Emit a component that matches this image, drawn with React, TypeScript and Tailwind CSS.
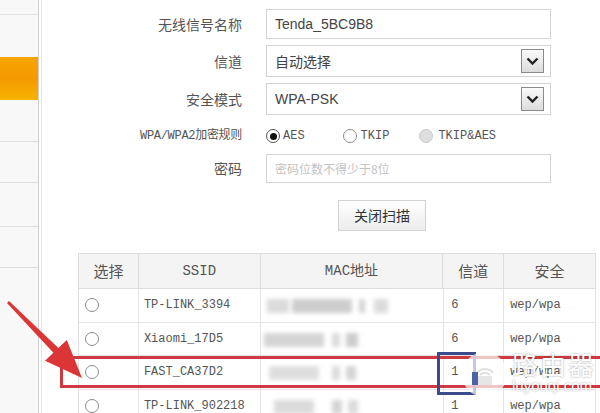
import React from "react";

const cjk = { fontFamily: '"Noto Sans CJK SC", "Noto Sans", sans-serif' };
const mono = { fontFamily: '"Liberation Mono", "Noto Sans CJK SC", monospace' };
const sans = { fontFamily: '"Liberation Sans", "Noto Sans CJK SC", sans-serif' };

function SelectArrow() {
  return (
    <div className="w-[23px] h-[24px] border border-[#8a8a8a] bg-gradient-to-b from-[#fafafa] to-[#dcdcdc] flex items-center justify-center">
      <svg width="13" height="9" viewBox="0 0 13 9">
        <path d="M1.5 1.5 L6.5 6.5 L11.5 1.5" fill="none" stroke="#222" strokeWidth="2.4" />
      </svg>
    </div>
  );
}

function Radio() {
  return <div className="w-[14px] h-[14px] rounded-full border border-[#8c8c8c] bg-white" />;
}

const rows = [
  { ssid: "TP-LINK_3394", ch: "6", mac: [[3, 22, 0.5], [28, 60, 0.7], [95, 6, 0.6], [110, 14, 0.5]] },
  { ssid: "Xiaomi_17D5", ch: "6", mac: [[0, 60, 0.6], [68, 8, 0.5], [82, 12, 0.7]] },
  { ssid: "FAST_CA37D2", ch: "1", mac: [[5, 50, 0.45], [68, 8, 0.5], [82, 10, 0.6]] },
  { ssid: "TP-LINK_902218", ch: "1", mac: [[10, 40, 0.5], [68, 10, 0.6], [84, 10, 0.5]] },
];

export default function App() {
  return (
    <div className="relative w-[600px] h-[413px] overflow-hidden bg-white flex">
      {/* sidebar */}
      <div className="w-[39px] shrink-0 bg-[#f8f8f8] border-r border-[#d0d0d0] flex flex-col">
        <div className="h-[15px] shrink-0 border-b border-[#e2e2e2]" />
        <div className="h-[42px] shrink-0" />
        <div className="h-[43px] shrink-0 bg-gradient-to-b from-[#f7a400] via-[#f49a00] to-[#f6b300]" />
        <div className="h-[42px] shrink-0 border-b border-[#dedede]" />
        <div className="h-[41px] shrink-0 border-b border-[#dedede]" />
        <div className="h-[44px] shrink-0 border-b border-[#dedede]" />
        <div className="h-[41px] shrink-0 border-b border-[#dedede]" />
      </div>
      <div className="w-[3px] shrink-0 border-r border-[#e6e6e6]" />

      {/* main */}
      <div className="flex-1 min-w-0">
        <div className="pt-[9px] text-[#555]">
          <div className="flex items-center h-[30px]">
            <div className="w-[200px] text-right text-[14px]" style={cjk}>无线信号名称</div>
            <div className="ml-[24px] w-[285px] h-[30px] border border-[#d4d4d4] flex items-center pl-[8px] text-[14px] text-[#444]" style={sans}>
              Tenda_5BC9B8
            </div>
          </div>
          <div className="flex items-center h-[32px] mt-[6px]">
            <div className="w-[200px] text-right text-[14px]" style={cjk}>信道</div>
            <div className="ml-[24px] w-[285px] h-[32px] border border-[#d4d4d4] flex items-center justify-between pl-[8px] pr-[6px] text-[14px] text-[#444]" style={cjk}>
              <span>自动选择</span>
              <SelectArrow />
            </div>
          </div>
          <div className="flex items-center h-[32px] mt-[6px]">
            <div className="w-[200px] text-right text-[14px]" style={cjk}>安全模式</div>
            <div className="ml-[24px] w-[285px] h-[32px] border border-[#d4d4d4] flex items-center justify-between pl-[8px] pr-[6px] text-[14px] text-[#444]" style={sans}>
              <span>WPA-PSK</span>
              <SelectArrow />
            </div>
          </div>
          <div className="flex items-center h-[24px] mt-[9px]">
            <div className="w-[200px] text-right text-[12px] tracking-[-0.3px]" style={mono}>WPA/WPA2加密规则</div>
            <div className="ml-[24px] flex items-center text-[12px]" style={mono}>
              <div className="w-[14px] h-[14px] rounded-full border border-[#555] bg-white flex items-center justify-center">
                <div className="w-[7px] h-[7px] rounded-full bg-[#111]" />
              </div>
              <span className="ml-[3px]">AES</span>
              <div className="ml-[38px]"><Radio /></div>
              <span className="ml-[4px]">TKIP</span>
              <div className="ml-[30px] w-[14px] h-[14px] rounded-full border border-[#c8c8c8] bg-[#dedede]" />
              <span className="ml-[5px]">TKIP&amp;AES</span>
            </div>
          </div>
          <div className="flex items-center h-[29px] mt-[6px]">
            <div className="w-[200px] text-right text-[14px]" style={cjk}>密码</div>
            <div className="ml-[24px] w-[285px] h-[29px] border border-[#d4d4d4] flex items-center pl-[8px] text-[12px] text-[#c2c2c2]" style={cjk}>
              密码位数不得少于8位
            </div>
          </div>
          <div className="mt-[17px] ml-[296px] w-[88px] h-[31px] border border-[#d2d2d2] bg-gradient-to-b from-[#ffffff] to-[#ececec] flex items-center justify-center text-[14px] text-[#333]" style={cjk}>
            关闭扫描
          </div>

          {/* table */}
          <div className="mt-[22px] ml-[36px] w-[518px] border-t border-l border-[#dddddd] text-[#555]">
            <div className="flex h-[35px] bg-[#f4f4f4] text-[15px]" style={cjk}>
              <div className="w-[60px] border-r border-b border-[#dddddd] flex items-center justify-center">选择</div>
              <div className="w-[122px] border-r border-b border-[#dddddd] flex items-center justify-center text-[14px]" style={mono}>SSID</div>
              <div className="w-[183px] border-r border-b border-[#dddddd] flex items-center justify-center text-[14px]" style={mono}>MAC地址</div>
              <div className="w-[61px] border-r border-b border-[#dddddd] flex items-center justify-center">信道</div>
              <div className="w-[92px] border-r border-b border-[#dddddd] flex items-center justify-center">安全</div>
            </div>
            {rows.map((r, i) => (
              <div key={i} className="flex h-[33.5px] text-[12px]" style={mono}>
                <div className="w-[60px] border-r border-b border-[#e4e4e4] flex items-center pl-[6px]"><Radio /></div>
                <div className="w-[122px] border-r border-b border-[#e4e4e4] flex items-center pl-[5px]">{r.ssid}</div>
                <div className="w-[183px] border-b border-[#e4e4e4] relative">
                  {r.mac.map((m, j) => (
                    <div
                      key={j}
                      className="absolute top-[10px] h-[14px] bg-[#b8b8b8] blur-[2px]"
                      style={{ left: 3 + m[0], width: m[1], opacity: m[2] }}
                    />
                  ))}
                </div>
                <div className="w-[61px] border-l border-r border-b border-[#e4e4e4] flex items-center pl-[7px]">{r.ch}</div>
                <div className="w-[92px] border-r border-b border-[#e4e4e4] flex items-center pl-[6px]">wep/wpa</div>
              </div>
            ))}
          </div>
        </div>
      </div>

      {/* annotations overlay */}
      <div className="absolute left-[60px] top-[356px] w-[560px] h-[32px] border-[3px] border-[#cf3a40]" />
      <div className="absolute left-[437px] top-[352px] w-[39px] h-[43px] border-[3px] border-[#3c4a8e]" />
      <svg className="absolute left-0 top-0" width="600" height="413" viewBox="0 0 600 413">
        <polygon points="7,303 53.4,352.8 45,360.7 82,378 66.8,340.1 58.4,348 9,301" fill="#dc3535" />
      </svg>

      {/* watermark */}
      <div className="absolute left-[462px] top-[352px] w-[45px] h-[45px] rounded-full bg-white/70 flex items-center justify-center">
        <svg width="28" height="28" viewBox="0 0 28 28">
          <path d="M6 12 A10 10 0 0 1 22 12" fill="none" stroke="#e0e0e0" strokeWidth="2" />
          <path d="M9 14 A6.5 6.5 0 0 1 19 14" fill="none" stroke="#e0e0e0" strokeWidth="2" />
          <rect x="7" y="15" width="14" height="9" rx="1" fill="#e6e6e6" />
        </svg>
      </div>
      <div className="absolute left-[472px] top-[372px] w-[6px] h-[13px] bg-[#4d63a8]" />
      <div className="absolute left-[512px] top-[348px] flex flex-col items-start text-white" style={cjk}>
        <span className="text-[26px] leading-[31px] tracking-[2px] [text-shadow:0_0_2px_rgba(0,0,0,0.4)]">路由器</span>
        <span className="text-[15px] leading-[14px] [text-shadow:0_0_2px_rgba(0,0,0,0.4)]" style={sans}>luyouqi.com</span>
      </div>
    </div>
  );
}
